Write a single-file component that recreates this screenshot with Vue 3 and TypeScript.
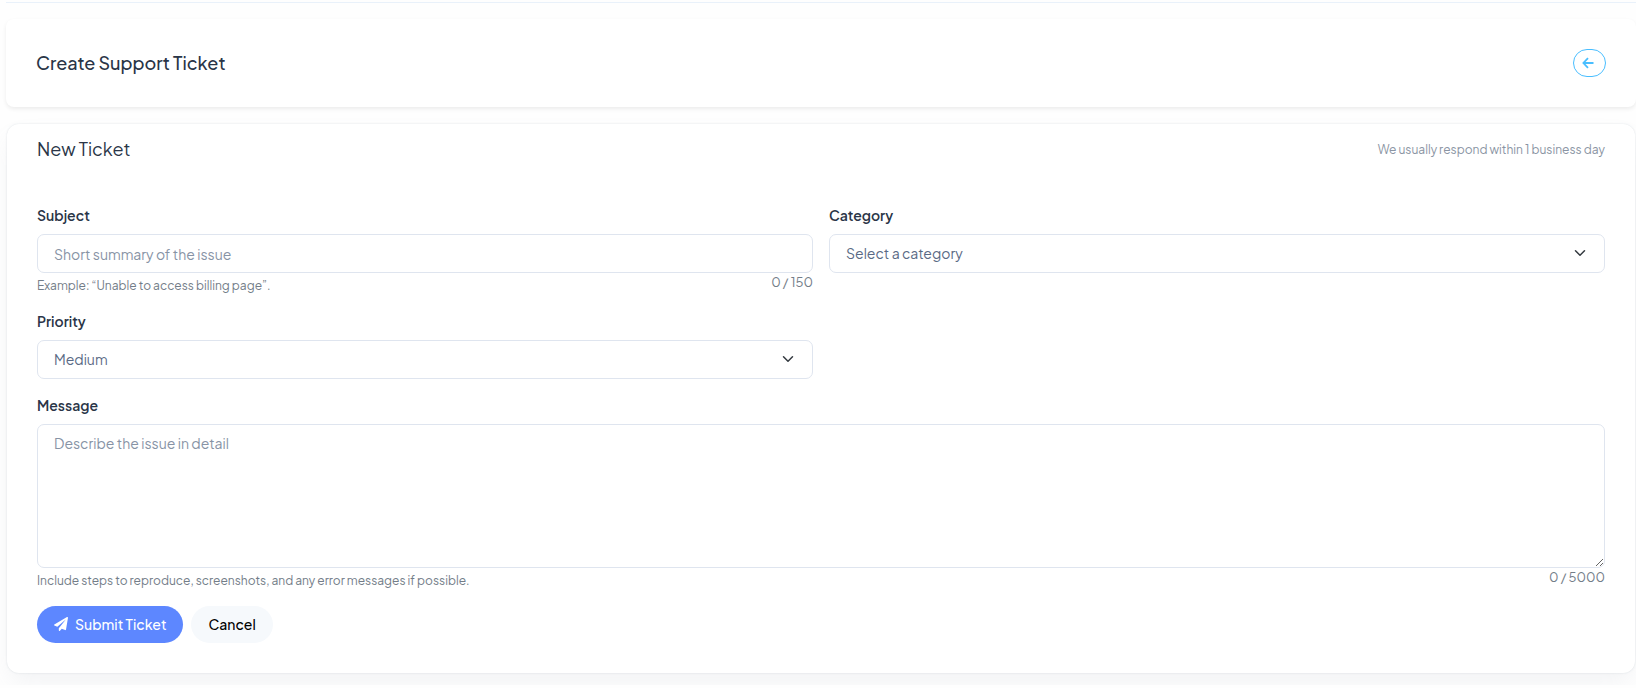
<script setup lang="ts">
import { ref } from 'vue'

const SUBJECT_MAX = 150
const MESSAGE_MAX = 5000

const subject = ref('')
const category = ref('')
const priority = ref('medium')
const message = ref('')
</script>

<template>
  <main class="page">
    <header class="title-card">
      <h1>Create Support Ticket</h1>
      <a class="back" href="#" aria-label="Back">
        <svg viewBox="0 0 12 12" width="12" height="12" aria-hidden="true">
          <path d="M11.5 6H1.8M6 1.2 1.4 6 6 10.8" fill="none" stroke="currentColor" stroke-width="1.8" />
        </svg>
      </a>
    </header>

    <section class="ticket-card">
      <div class="card-head">
        <h2>New Ticket</h2>
        <span class="note">We usually respond within 1 business day</span>
      </div>

      <form @submit.prevent>
        <div class="fields">
          <div class="field">
            <label for="subject">Subject</label>
            <input id="subject" v-model="subject" class="control" type="text" :maxlength="SUBJECT_MAX" placeholder="Short summary of the issue" />
            <div class="hint">
              <small>Example: “Unable to access billing page”.</small>
              <span>{{ subject.length }} / {{ SUBJECT_MAX }}</span>
            </div>
          </div>

          <div class="field">
            <label for="category">Category</label>
            <div class="select">
              <select id="category" v-model="category" class="control">
                <option value="">Select a category</option>
              </select>
              <svg class="chevron" viewBox="0 0 16 16" width="12" height="12" aria-hidden="true">
                <path d="m2 5 6 6 6-6" fill="none" stroke="#343a40" stroke-width="2" stroke-linecap="round" stroke-linejoin="round" />
              </svg>
            </div>
          </div>

          <div class="field">
            <label for="priority">Priority</label>
            <div class="select">
              <select id="priority" v-model="priority" class="control">
                <option value="medium">Medium</option>
              </select>
              <svg class="chevron" viewBox="0 0 16 16" width="12" height="12" aria-hidden="true">
                <path d="m2 5 6 6 6-6" fill="none" stroke="#343a40" stroke-width="2" stroke-linecap="round" stroke-linejoin="round" />
              </svg>
            </div>
          </div>

          <div class="field wide">
            <label for="message">Message</label>
            <textarea id="message" v-model="message" class="control" rows="6" :maxlength="MESSAGE_MAX" placeholder="Describe the issue in detail"></textarea>
            <div class="hint">
              <small>Include steps to reproduce, screenshots, and any error messages if possible.</small>
              <span>{{ message.length }} / {{ MESSAGE_MAX }}</span>
            </div>
          </div>
        </div>

        <div class="actions">
          <button class="btn primary" type="submit">
            <svg viewBox="0 0 512 512" width="14" height="14" aria-hidden="true">
              <path fill="currentColor" d="M476 3.2L12.5 270.6c-18.1 10.4-15.8 35.6 2.2 43.2L121 358.4l287.3-253.2c5.5-4.9 13.3 2.6 8.6 8.3L176 407v80.5c0 23.6 28.5 32.9 42.5 15.8L282 426l124.6 52.2c14.2 6 30.4-2.9 33-18.2l72-432C515 7.8 493.3-6.8 476 3.2z" />
            </svg>
            <span>Submit Ticket</span>
          </button>
          <button class="btn light" type="button">Cancel</button>
        </div>
      </form>
    </section>
  </main>
</template>

<style>
body {
  background: #fefefe;
}
</style>

<style scoped>
* {
  box-sizing: border-box;
}

.page {
  margin: 2px 0 0 6px;
  padding-top: 16px;
  padding-bottom: 12px;
  border-top: 1px solid #e9f1fa;
  color: #2a3547;
  font-family: "Plus Jakarta Sans", Inter, "Liberation Sans", sans-serif;
  font-size: 14px;
}

.title-card {
  display: flex;
  align-items: center;
  justify-content: space-between;
  padding: 30px;
  border-radius: 8px;
  background: #fff;
  box-shadow: 0 2px 4px rgba(0, 0, 0, 0.075);
}

h1,
h2 {
  margin: 0;
  font-weight: 500;
  font-size: 18px;
  line-height: 28px;
}

h2 {
  font-weight: 400;
  line-height: 24px;
}

.back {
  display: flex;
  align-items: center;
  justify-content: center;
  width: 33px;
  height: 28px;
  padding-right: 4px;
  border: 1px solid #49beff;
  border-radius: 14px;
  color: #49beff;
}

.ticket-card {
  margin: 17px 1px 0;
  padding: 13px 30px 30px;
  border-radius: 12px;
  background: #fff;
  box-shadow: 0 0 2px rgba(145, 158, 171, 0.3), 0 12px 24px -4px rgba(145, 158, 171, 0.12);
}

.card-head {
  display: flex;
  align-items: flex-start;
  justify-content: space-between;
  margin-bottom: 42px;
}

.note {
  color: #8a94a3;
  font-size: 12px;
  line-height: 26px;
}

.fields {
  display: grid;
  grid-template-columns: 1fr 1fr;
  gap: 16px;
}

.wide {
  grid-column: 1 / -1;
}

label {
  display: block;
  margin-bottom: 8px;
  font-weight: 600;
  line-height: 21px;
}

.control {
  display: block;
  width: 100%;
  height: 39px;
  margin: 0;
  padding: 8px 16px;
  border: 1px solid #dfe5ef;
  border-radius: 7px;
  outline: none;
  background: transparent;
  color: #5a6a85;
  font: inherit;
  line-height: 21px;
}

.control::placeholder {
  color: #8793a5;
  opacity: 1;
}

.control:focus {
  border-color: #5d87ff;
}

textarea.control {
  height: 144px;
  resize: vertical;
}

.select {
  position: relative;
}

select.control {
  appearance: none;
}

.chevron {
  position: absolute;
  top: 13px;
  right: 19px;
  pointer-events: none;
}

.hint {
  display: flex;
  justify-content: space-between;
  color: #737d88;
  font-size: 13px;
  line-height: 18px;
}

.hint small {
  margin-top: 4px;
  font-size: 12px;
}

.actions {
  display: flex;
  gap: 8px;
  margin-top: 16px;
}

.btn {
  display: flex;
  align-items: center;
  gap: 7px;
  height: 37px;
  padding: 0 17px 1px;
  border: 0;
  border-radius: 19px;
  font: inherit;
  font-weight: 500;
  cursor: pointer;
}

.primary {
  background: #5d87ff;
  color: #fff;
}

.light {
  background: #f6f9fc;
  color: #000;
}
</style>
